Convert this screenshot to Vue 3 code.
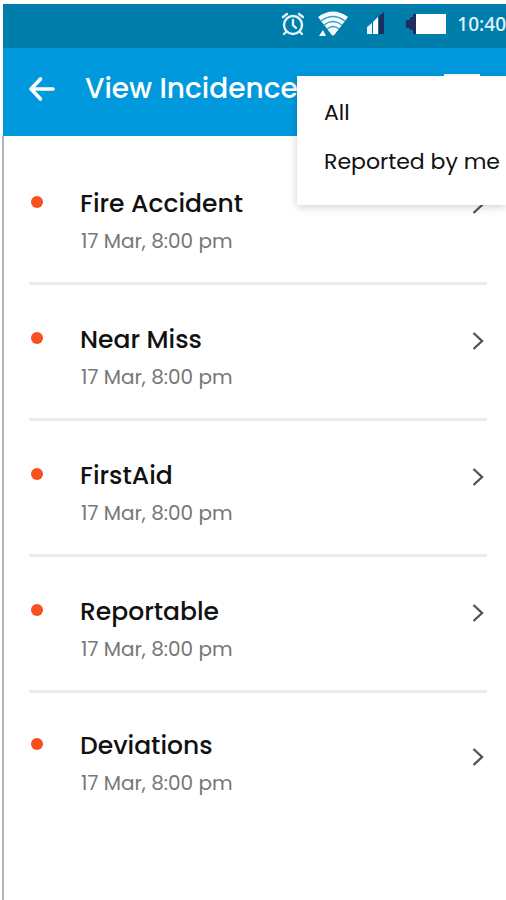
<script setup>
const incidents = [
  { title: 'Fire Accident', time: '17 Mar, 8:00 pm' },
  { title: 'Near Miss', time: '17 Mar, 8:00 pm' },
  { title: 'FirstAid', time: '17 Mar, 8:00 pm' },
  { title: 'Reportable', time: '17 Mar, 8:00 pm' },
  { title: 'Deviations', time: '17 Mar, 8:00 pm' },
]
const filters = ['All', 'Reported by me']
</script>

<template>
  <div class="screen">
    <div class="status">
      <svg class="alarm" width="24" height="24" viewBox="0 0 24 24" fill="none" stroke="#e4f4fb" stroke-width="2.4" stroke-linecap="round">
        <circle cx="12" cy="13" r="9" />
        <path d="M12 8v5l3 3M2 5l4-3M22 5l-4-3M5 20l-2 2M19 20l2 2" />
      </svg>
      <svg class="wifi" width="32" height="26" viewBox="0 0 32 26">
        <path d="M1 6Q16-5 31 6L18 23Q16 26 14 23Z" fill="#f4fbfe" />
        <path d="M4 10Q16 1 28 10M7 14Q16 7 25 14M10 18Q16 13 22 18" fill="none" stroke="#3b9bc0" stroke-width="1.3" />
        <path d="M2 25l4-6 3 6z" fill="#f4fbfe" />
      </svg>
      <svg class="signal" width="18" height="23" viewBox="0 0 18 23">
        <path d="M0 15l5-4v11H0z" fill="#e4f4fb" />
        <path d="M6 10l5-5v17H6z" fill="#fff" />
        <path d="M12 4l5-4v22h-5z" fill="#202c5c" />
      </svg>
      <svg class="battery" width="41" height="22" viewBox="0 0 41 22">
        <path d="M0 7h3l2-3h2V1h5v20H7v-4H5l-2-2H0z" fill="#202c5c" />
        <path d="M10 1h30v20H10z" fill="#fff" />
      </svg>
      <span class="clock">10:40</span>
    </div>

    <header class="bar">
      <button class="back" aria-label="Back">
        <svg width="28" height="26" viewBox="0 0 28 26" fill="none" stroke="#fff" stroke-width="3.6" stroke-linecap="round" stroke-linejoin="round">
          <path d="M25 13H3M12.500 3L3 13l9.500 10" />
        </svg>
      </button>
      <h1>View Incidence</h1>
      <span class="tab"></span>
      <div class="menu">
        <button v-for="f in filters" :key="f" class="option">{{ f }}</button>
      </div>
    </header>

    <ul class="list">
      <li v-for="item in incidents" :key="item.title" class="row">
        <span class="dot"></span>
        <div class="text">
          <h2>{{ item.title }}</h2>
          <p>{{ item.time }}</p>
        </div>
        <svg class="chevron" width="12" height="20" viewBox="0 0 12 20" fill="none" stroke="#555" stroke-width="2.4">
          <path d="M1.500 2L10 10l-8.500 8" />
        </svg>
      </li>
    </ul>
  </div>
</template>

<style>
body {
  margin: 0;
  background: #fff;
}
</style>

<style scoped>
.screen {
  box-sizing: border-box;
  min-height: 100vh;
  padding-top: 4px;
  padding-left: 3px;
  overflow: hidden;
  background: linear-gradient(#b5b5b5, #b5b5b5) 2px 136px / 2px 100% no-repeat #fff;
  font-family: Poppins, Inter, "Noto Sans", sans-serif;
  color: #111;
}
h1, h2, p, ul {
  margin: 0;
  padding: 0;
}
button {
  padding: 0;
  border: 0;
  background: none;
  font: inherit;
  color: inherit;
  text-align: left;
}
svg {
  display: block;
  flex: none;
}
.status {
  display: flex;
  justify-content: flex-end;
  align-items: center;
  height: 44px;
  padding-bottom: 5px;
  box-sizing: border-box;
  background: #007eab;
}
.wifi {
  margin-left: 12px;
}
.signal {
  margin-left: 18px;
}
.battery {
  margin-left: 21px;
}
.clock {
  margin-left: 10px;
  font: 500 19px/24px "Noto Sans", sans-serif;
  color: #e4f4fb;
}
.bar {
  position: relative;
  display: flex;
  align-items: center;
  height: 88px;
  padding: 0 0 6px 25px;
  box-sizing: border-box;
  background: #0099dd;
  color: #fff;
}
.back {
  flex: none;
}
h1 {
  margin-left: 29px;
  font-size: 28px;
  line-height: 36px;
  font-weight: 500;
  white-space: nowrap;
}
.tab {
  position: absolute;
  top: 26px;
  right: 26px;
  width: 36px;
  height: 20px;
  background: #fff;
}
.menu {
  position: absolute;
  z-index: 1;
  top: 28px;
  right: 0;
  display: flex;
  flex-direction: column;
  gap: 21px;
  width: 209px;
  height: 129px;
  padding: 23px 0 0 27px;
  box-sizing: border-box;
  background: #fff;
  box-shadow: 0 2px 8px rgba(0, 0, 0, 0.18);
  color: #111;
}
.option {
  font-size: 22px;
  line-height: 28px;
  white-space: nowrap;
}
.list {
  padding: 13px 19px 0 26px;
  list-style: none;
}
.row {
  display: flex;
  align-items: flex-start;
  height: 136px;
  padding-top: 38px;
  box-sizing: border-box;
  border-bottom: 3px solid #ebebeb;
}
.row:last-child {
  border-bottom: 0;
  padding-top: 36px;
}
.dot {
  flex: none;
  width: 12px;
  height: 12px;
  margin: 9px 0 0 2px;
  border-radius: 50%;
  background: #f4511e;
}
.text {
  flex: 1;
  margin-left: 37px;
}
h2 {
  font-size: 25px;
  line-height: 34px;
  font-weight: 500;
}
p {
  margin-top: 6px;
  padding-left: 1px;
  font-size: 20px;
  line-height: 28px;
  color: #777;
}
.chevron {
  margin: 8px 3px 0 0;
}
.row:last-child .chevron {
  margin-top: 18px;
}
</style>
